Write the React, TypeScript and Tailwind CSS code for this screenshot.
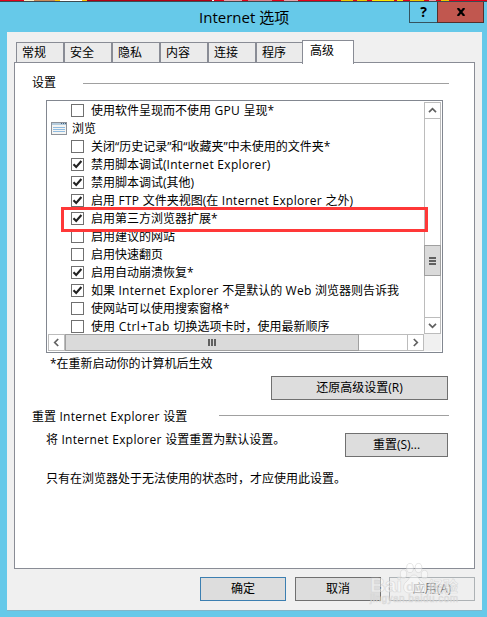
import type { ReactNode } from 'react';

const TABS = ['常规', '安全', '隐私', '内容', '连接', '程序'];

interface Option {
  label: string;
  checked?: boolean;
  group?: boolean;
}

const OPTIONS: Option[] = [
  { label: '使用软件呈现而不使用 GPU 呈现*' },
  { label: '浏览', group: true },
  { label: '关闭“历史记录”和“收藏夹”中未使用的文件夹*' },
  { label: '禁用脚本调试(Internet Explorer)', checked: true },
  { label: '禁用脚本调试(其他)', checked: true },
  { label: '启用 FTP 文件夹视图(在 Internet Explorer 之外)', checked: true },
  { label: '启用第三方浏览器扩展*', checked: true },
  { label: '启用建议的网站' },
  { label: '启用快速翻页' },
  { label: '启用自动崩溃恢复*', checked: true },
  { label: '如果 Internet Explorer 不是默认的 Web 浏览器则告诉我', checked: true },
  { label: '使网站可以使用搜索窗格*' },
  { label: '使用 Ctrl+Tab 切换选项卡时，使用最新顺序' },
];

// Latin words are set slightly wider than the Chinese around them
function Label({ text }: { text: string }) {
  return (
    <>
      {text.split(/([A-Za-z+ ]{2,})/).map((part, i) =>
        i % 2 === 1 ? (
          <span key={i} className={part.includes('+') ? 'tracking-[0.5px]' : 'tracking-[0.3px]'}>
            {part}
          </span>
        ) : (
          part
        )
      )}
    </>
  );
}

function GroupIcon() {
  return (
    <svg width="16" height="13" viewBox="0 0 16 13" shapeRendering="crispEdges">
      <rect x="0.5" y="0.5" width="15" height="12" fill="#f4f4f2" stroke="#8d9299" />
      <rect x="1" y="1" width="14" height="2" fill="#b4cbdc" />
      <path d="M10 1.5h1M12 1.5h1M14 1.5h1" stroke="#45617c" />
      <path d="M2 5.5h12M2 7.5h12M2 9.5h12" stroke="#8fbbe0" />
    </svg>
  );
}

function CheckBox({ checked }: { checked?: boolean }) {
  return (
    <span className="mt-[2px] h-[13px] w-[13px] shrink-0 border border-[#707070] bg-white">
      {checked && (
        <svg width="11" height="11" viewBox="0 0 11 11" fill="none">
          <path d="M1.5 5.2L4.2 8L9.4 2" stroke="#212121" strokeWidth="2.1" />
        </svg>
      )}
    </span>
  );
}

function OptionRow({ label, checked, group }: Option) {
  if (group) {
    return (
      <div className="flex h-[18px] items-start gap-[5px] pl-1">
        <span className="mt-[2px]">
          <GroupIcon />
        </span>
        <span>{label}</span>
      </div>
    );
  }
  return (
    <div className="flex h-[18px] items-start gap-[7px] pl-6">
      <CheckBox checked={checked} />
      <span>
        <Label text={label} />
      </span>
    </div>
  );
}

function ArrowButton({ d }: { d: string }) {
  return (
    <div className="flex h-[17px] w-[17px] shrink-0 items-center justify-center border border-[#bcbcbc] bg-white">
      <svg width="9" height="9" viewBox="0 0 9 9" fill="none">
        <path d={d} stroke="#606060" strokeWidth="1.7" />
      </svg>
    </div>
  );
}

function PushButton({ className, children }: { className: string; children: ReactNode }) {
  return (
    <button className={`flex h-6 shrink-0 items-center justify-center border leading-[18px] ${className}`}>
      {children}
    </button>
  );
}

function Watermark() {
  return (
    <svg
      className="pointer-events-none absolute top-[560px] left-[368px]"
      width="96"
      height="46"
      viewBox="0 0 96 46"
    >
      <g fill="#ffffff" fillOpacity="0.45" stroke="#cfcfcf" strokeOpacity="0.7" strokeWidth="0.7">
        <ellipse cx="35.5" cy="14" rx="3.2" ry="4.2" />
        <ellipse cx="42" cy="8" rx="3.4" ry="4.6" />
        <ellipse cx="50.5" cy="8" rx="3.4" ry="4.6" />
        <ellipse cx="56.5" cy="14.5" rx="3.2" ry="4.2" />
        <path d="M46 15c-4 0-5 5-8 7c-4 3-3 11 3 11c3 0 3-1 5-1s3 1 6 1c6 0 6-8 2-11c-3-2-4-7-8-7z" />
        <text x="2" y="32" fontSize="21" fontWeight="700" textLength="32" fontFamily="Liberation Sans, sans-serif">Bai</text>
        <text x="60" y="32" fontSize="15" fontWeight="700" fontFamily="Noto Sans CJK SC, sans-serif">经验</text>
        <text x="2" y="42" fontSize="10" textLength="88" fontFamily="Liberation Sans, sans-serif">jingyan.baidu.com</text>
      </g>
      <text x="38" y="31" fontSize="13" fontWeight="700" fill="#d8d8d8" fillOpacity="0.7" fontFamily="Liberation Sans, sans-serif">du</text>
    </svg>
  );
}

export default function App() {
  return (
    <div className="relative flex h-[617px] w-[487px] flex-col overflow-hidden bg-[#66c9e9] font-['Open_Sans','Noto_Sans_CJK_SC',sans-serif] text-[12px] leading-[18px] text-black">
      {/* sliver of the page behind the dialog */}
      <div className="flex h-[2px] shrink-0 border-b border-[#3d4b52] bg-[#e2001a]">
        <div className="ml-6 w-[10px] bg-[#f8eec8]" />
        <div className="w-[21px] bg-[#c98a5a]" />
        <div className="w-[5px] bg-[#ffc400]" />
        <div className="w-[22px] bg-white" />
        <div className="w-[5px] bg-[#ffc400]" />
        <div className="w-[125px] bg-[#b00014]" />
        <div className="w-[2px] bg-white" />
        <div className="ml-[10px] w-[18px] bg-[#e8a0a8]" />
        <div className="ml-[6px] w-[24px] bg-[#dc7c88]" />
        <div className="ml-[12px] w-[14px] bg-[#e8a0a8]" />
        <div className="ml-[43px] w-[12px] bg-[#f0c800]" />
        <div className="ml-[4px] w-[10px] bg-[#f0c800]" />
        <div className="ml-[5px] w-[22px] bg-[#ffe600]" />
        <div className="ml-[3px] w-[6px] bg-[#ffe600]" />
        <div className="ml-[7px] w-[14px] bg-[#f0c800]" />
        <div className="ml-[5px] w-[7px] bg-[#e8a0a8]" />
        <div className="ml-[5px] w-[8px] bg-[#f0c800]" />
      </div>

      <header className="flex h-[30px] shrink-0 items-start pr-[3px]">
        <h1 className="flex-1 pt-[5px] pl-[199px] text-[15px] leading-5 whitespace-nowrap">Internet 选项</h1>
        <button className="flex h-[21px] w-[29px] items-center justify-center border border-t-0 border-[#35545f] text-[14px] font-bold">
          ?
        </button>
        <button className="-ml-px flex h-[21px] w-[47px] items-center justify-center border border-t-0 border-[#54302d] bg-[#c1574f]">
          <svg width="10" height="8" viewBox="0 0 10 8">
            <path d="M1.7 0L8.3 8M8.3 0L1.7 8" stroke="#000" strokeWidth="2.2" />
          </svg>
        </button>
      </header>

      <main className="ml-[7px] flex h-[579px] w-[475px] shrink-0 flex-col border-b border-[#83b5c7] bg-[#f0f0f0] pt-2 pl-[7px]">
        <div className="z-10 flex h-6 items-start pl-[2px]">
          {TABS.map((tab) => (
            <div
              key={tab}
              className="mt-[2px] h-5 w-12 shrink-0 border border-b-0 border-[#898c95] bg-[#ebebeb] pl-[5px] leading-5"
            >
              {tab}
            </div>
          ))}
          <div className="z-10 -ml-[2px] h-6 w-[52px] shrink-0 border border-b-0 border-[#898c95] bg-white pl-[7px] leading-5">
            高级
          </div>
        </div>

        <section className="-mt-[2px] flex h-[507px] w-[461px] shrink-0 flex-col border border-[#898c95] bg-white">
          <div className="mt-[11px] flex h-[18px] items-center pl-[17px]">
            <span className="w-[51px]">设置</span>
            <span className="h-px w-[366px] bg-[#a0a0a0]" />
          </div>

          <div className="mt-2 ml-[31px] flex h-[253px] w-[397px] flex-col border border-[#828790] p-px">
            <div className="flex h-[232px]">
              <div className="-ml-px w-[377px] overflow-hidden whitespace-nowrap">
                {OPTIONS.map((option) => (
                  <OptionRow key={option.label} {...option} />
                ))}
              </div>
              <div className="flex w-[17px] flex-col border-x border-[#bcbcbc] bg-white">
                <div className="-mx-px">
                  <ArrowButton d="M1 6.2L4.5 2.7L8 6.2" />
                </div>
                <div className="-mx-px mt-[126px] flex h-[31px] flex-col items-center justify-center gap-px border border-[#a0a0a0] bg-[#dadada]">
                  <span className="h-[2px] w-[7px] bg-[#606060]" />
                  <span className="h-[2px] w-[7px] bg-[#606060]" />
                  <span className="h-[2px] w-[7px] bg-[#606060]" />
                </div>
                <div className="-mx-px mt-auto">
                  <ArrowButton d="M1 2.8L4.5 6.3L8 2.8" />
                </div>
              </div>
            </div>
            <div className="flex h-[17px] bg-[#f0f0f0]">
              <div className="flex w-[376px] border-y border-[#bcbcbc] bg-white">
                <div className="-my-px">
                  <ArrowButton d="M6.2 1L2.7 4.5L6.2 8" />
                </div>
                <div className="-my-px flex w-[294px] items-center justify-center gap-px border border-[#a0a0a0] bg-[#dadada]">
                  <span className="h-[7px] w-[2px] bg-[#606060]" />
                  <span className="h-[7px] w-[2px] bg-[#606060]" />
                  <span className="h-[7px] w-[2px] bg-[#606060]" />
                </div>
                <div className="-my-px ml-auto">
                  <ArrowButton d="M2.8 1L6.3 4.5L2.8 8" />
                </div>
              </div>
            </div>
          </div>

          <p className="mt-[2px] pl-[35px]">*在重新启动你的计算机后生效</p>
          <PushButton className="mt-[3px] ml-[256px] w-[177px] border-[#707070] bg-[#dddddd]">还原高级设置(R)</PushButton>

          <div className="mt-[6px] flex h-[18px] items-start pl-[17px]">
            <span className="mt-[2px] w-[187px]">
              <Label text="重置 Internet Explorer 设置" />
            </span>
            <span className="mt-[9px] h-px w-[230px] bg-[#a0a0a0]" />
          </div>
          <div className="mt-[7px] flex items-start pl-[31px]">
            <p className="w-[299px]">
              <Label text="将 Internet Explorer 设置重置为默认设置。" />
            </p>
            <PushButton className="mt-[2px] w-[103px] border-[#707070] bg-[#dddddd]">重置(S)...</PushButton>
          </div>
          <p className="mt-[13px] pl-[31px]">只有在浏览器处于无法使用的状态时，才应使用此设置。</p>
        </section>

        <footer className="mt-2 flex pl-[186px]">
          <PushButton className="w-[86px] border-[#3c7fb1] bg-[#dddddd]">确定</PushButton>
          <PushButton className="ml-[9px] w-[86px] border-[#707070] bg-[#dddddd]">取消</PushButton>
          <PushButton className="ml-2 w-[86px] border-[#adb2b5] bg-[#efefef] text-[#777777]">应用(A)</PushButton>
        </footer>
      </main>

      <div className="pointer-events-none absolute top-[207px] left-[61px] h-[25px] w-[367px] border-[3px] border-[#ff3838]" />
      <Watermark />
    </div>
  );
}
